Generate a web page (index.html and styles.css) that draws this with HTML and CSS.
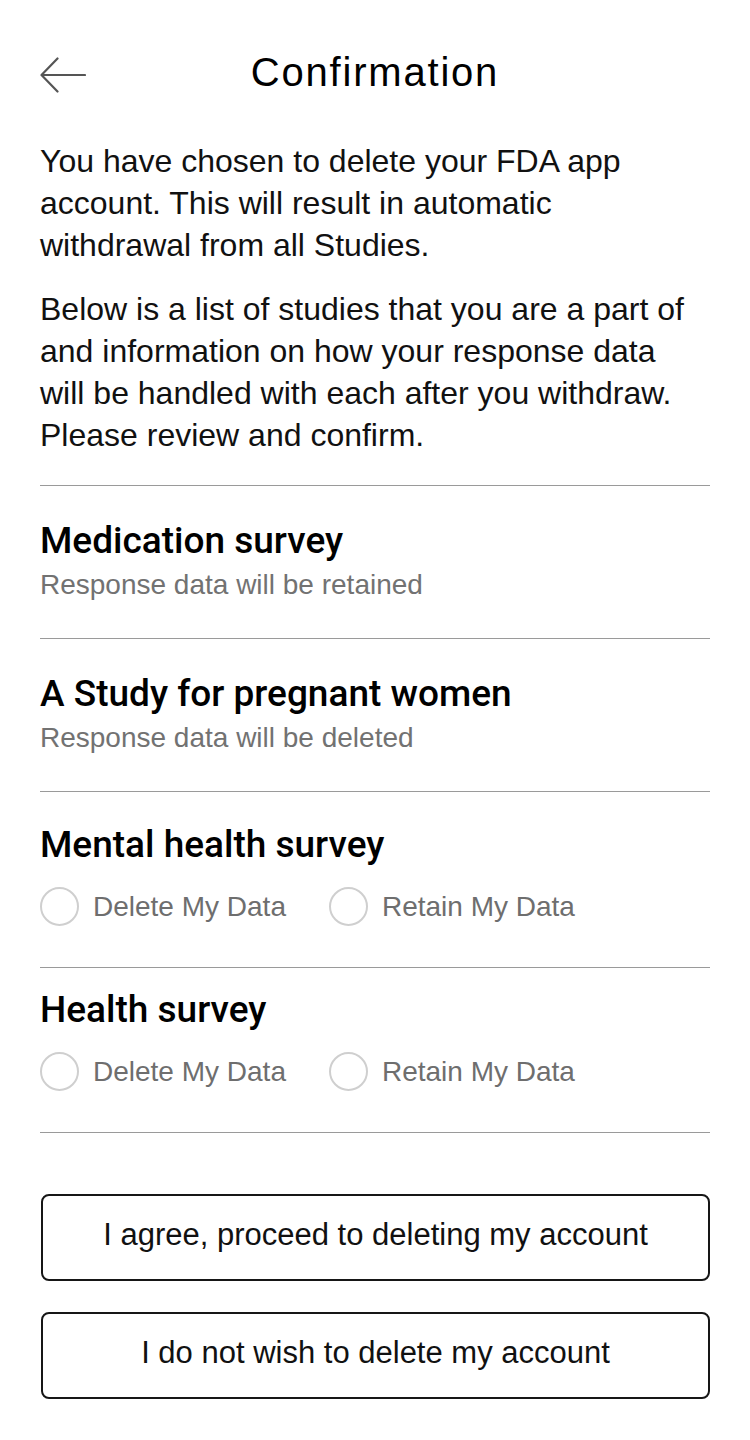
FILE: index.html
```html
<!DOCTYPE html>
<html lang="en">
<head>
<meta charset="utf-8">
<title>Confirmation</title>
<link rel="stylesheet" href="styles.css">
</head>
<body>
<div class="page">
  <header class="header">
    <button class="back" aria-label="Back">
      <svg width="46" height="36" viewBox="0 0 46 36" fill="none" stroke="#555" stroke-width="2.2" stroke-linecap="round" stroke-linejoin="round">
        <path d="M45 18H2"/>
        <path d="M17.5 1.5L1.5 18L17.5 34.5"/>
      </svg>
    </button>
    <h1 class="title">Confirmation</h1>
    <span class="spacer"></span>
  </header>

  <p class="intro">You have chosen to delete your FDA app account. This will result in automatic withdrawal from all Studies.</p>
  <p class="intro intro-second">Below is a list of studies that you are a part of and information on how your response data will be handled with each after you withdraw. Please review and confirm.</p>

  <ul class="studies">
    <li class="study">
      <h2 class="study-name">Medication survey</h2>
      <p class="study-note">Response data will be retained</p>
    </li>
    <li class="study">
      <h2 class="study-name">A Study for pregnant women</h2>
      <p class="study-note">Response data will be deleted</p>
    </li>
    <li class="study study-choice">
      <h2 class="study-name">Mental health survey</h2>
      <div class="options">
        <label class="option"><span class="radio"></span>Delete My Data</label>
        <label class="option"><span class="radio"></span>Retain My Data</label>
      </div>
    </li>
    <li class="study study-choice study-compact">
      <h2 class="study-name">Health survey</h2>
      <div class="options">
        <label class="option"><span class="radio"></span>Delete My Data</label>
        <label class="option"><span class="radio"></span>Retain My Data</label>
      </div>
    </li>
  </ul>

  <div class="actions">
    <button class="action">I agree, proceed to deleting my account</button>
    <button class="action">I do not wish to delete my account</button>
  </div>
</div>
</body>
</html>
```
FILE: styles.css
```css
* {
  box-sizing: border-box;
}

html, body {
  margin: 0;
  padding: 0;
  background: #ffffff;
}

body {
  font-family: "Liberation Sans", Arial, sans-serif;
  color: #111111;
}

.page {
  width: 750px;
  height: 1440px;
  padding: 0 40px;
  overflow: hidden;
}

.header {
  display: grid;
  grid-template-columns: 46px 1fr 46px;
  align-items: start;
  height: 36px;
  margin-top: 57px;
  margin-bottom: 47px;
}

.back {
  display: block;
  width: 46px;
  height: 36px;
  padding: 0;
  margin: 0;
  border: 0;
  background: none;
}

.back svg {
  display: block;
}

.title {
  margin: -3px 0 0;
  font-size: 40px;
  line-height: 36px;
  font-weight: 400;
  letter-spacing: 1.8px;
  text-align: center;
  color: #000;
}

.intro {
  margin: 0;
  padding-right: 10px;
  font-size: 32px;
  line-height: 42px;
  color: #111;
}

.intro-second {
  margin-top: 22px;
}

.studies {
  list-style: none;
  margin: 29px 0 0;
  padding: 0;
  border-top: 1px solid #9a9a9a;
}

.study {
  border-bottom: 1px solid #9a9a9a;
  padding: 34px 0 36px;
}

.study-name {
  margin: 0;
  font-family: Roboto, "Liberation Sans", sans-serif;
  font-weight: 500;
  font-size: 37px;
  line-height: 42px;
  color: #000;
}

.study-note {
  margin: 6px 0 0;
  font-size: 28px;
  line-height: 34px;
  color: #727272;
}

.study-choice {
  padding: 32px 0 41px;
}

.study-compact {
  padding-top: 21px;
}

.options {
  display: flex;
  gap: 43px;
  margin-top: 21px;
}

.option {
  display: flex;
  align-items: center;
  gap: 14px;
  font-size: 28px;
  line-height: 39px;
  color: #6e6e6e;
}

.radio {
  width: 39px;
  height: 39px;
  border: 2px solid #cfcfcf;
  border-radius: 50%;
  flex: none;
}

.actions {
  display: flex;
  flex-direction: column;
  gap: 31px;
  margin-top: 61px;
}

.action {
  display: flex;
  align-items: center;
  justify-content: center;
  height: 87px;
  margin-left: 1px;
  padding: 0 0 6px;
  border: 2px solid #161616;
  border-radius: 8px;
  background: #fff;
  font-family: "Liberation Sans", Arial, sans-serif;
  font-size: 31px;
  color: #111;
}
```
